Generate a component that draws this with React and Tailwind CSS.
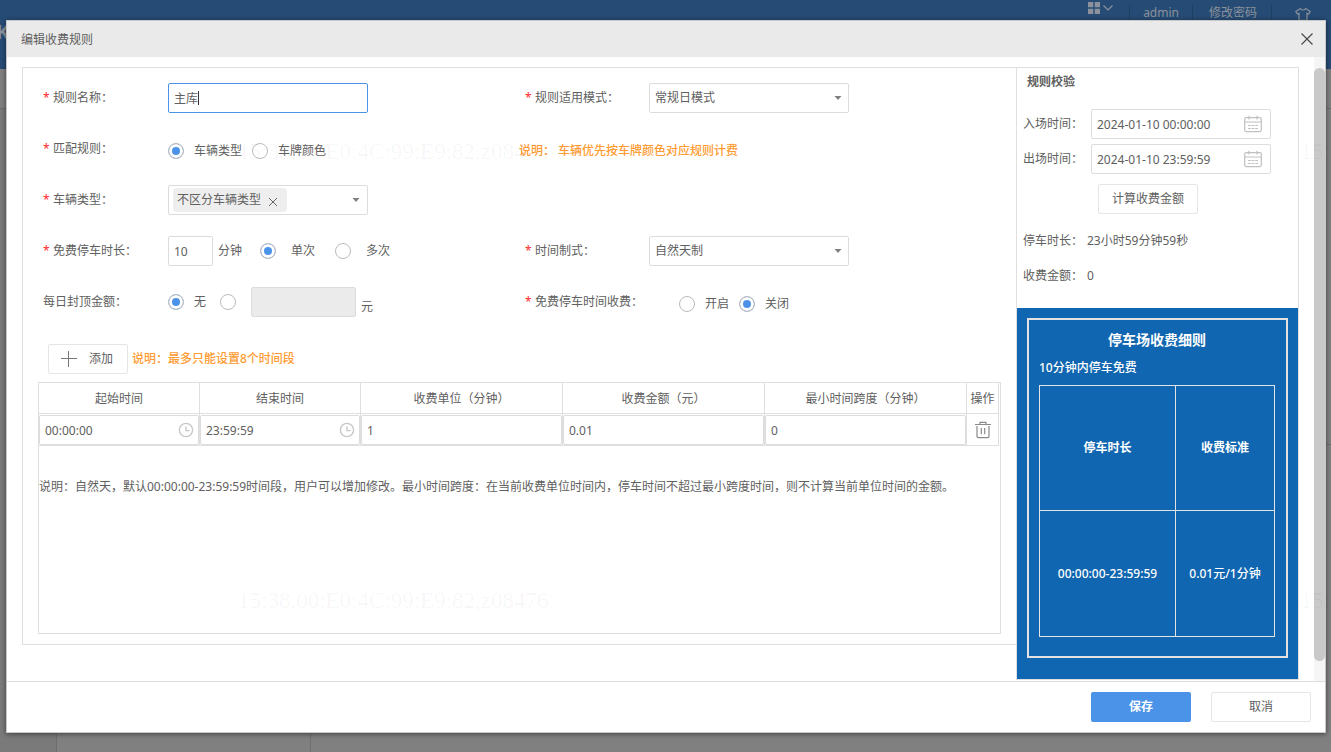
import { useState } from 'react';

const COLUMNS = [
  { key: 'start', label: '起始时间', width: 'w-[161px]' },
  { key: 'end', label: '结束时间', width: 'w-[161px]' },
  { key: 'unit', label: '收费单位（分钟）', width: 'w-[202px]' },
  { key: 'amount', label: '收费金额（元）', width: 'w-[202px]' },
  { key: 'span', label: '最小时间跨度（分钟）', width: 'w-[202px]' },
];

const WATERMARK = '15:38,00:E0:4C:99:E9:82,z08476';

function ClockIcon() {
  return (
    <svg className="absolute right-[5px] top-1/2 -translate-y-1/2 pointer-events-none" width="16" height="16" viewBox="0 0 16 16" fill="none" stroke="#c8c8c8" strokeWidth="1.4">
      <circle cx="8" cy="8" r="6.6" />
      <path d="M8 4.5V8.6H11.6" />
    </svg>
  );
}

function CalendarIcon() {
  return (
    <svg className="absolute right-[9px] top-1/2 -translate-y-1/2 pointer-events-none" width="18" height="18" viewBox="0 0 18 18" fill="none" stroke="#c0c0c0" strokeWidth="1.2">
      <rect x="0.7" y="2.6" width="16.6" height="14" rx="1.5" />
      <path d="M1 7H17M5 0.8V4.6M13 0.8V4.6" />
      <path d="M4 10.5H14M4 13.5H14" strokeDasharray="2.8 0.8" />
    </svg>
  );
}

function TrashIcon() {
  return (
    <svg width="16" height="18" viewBox="0 0 16 18" fill="none" stroke="#8a8a8a" strokeWidth="1.2">
      <path d="M0 3.5H16M5 3.5V1.3H11V3.5" />
      <path d="M2 5V15.2Q2 16.6 3.4 16.6H12.6Q14 16.6 14 15.2V5M6.3 7V13.2M9.7 7V13.2" />
    </svg>
  );
}

function Label({ htmlFor, required = true, className = 'w-[125px]', children }) {
  return (
    <label htmlFor={htmlFor} className={`${className} shrink-0 whitespace-nowrap flex`}>
      {required && <span className="w-[10px] text-[#ff2a2a]">*</span>}
      {children}
    </label>
  );
}

function Radio({ name, label, gap = 'gap-[10px]', ...props }) {
  return (
    <label className={`flex items-center ${gap}`}>
      <input
        type="radio"
        name={name}
        aria-label={label ? undefined : '自定义金额'}
        className="appearance-none w-4 h-4 rounded-full border border-[#bbb] bg-white checked:bg-[#4b93e8] checked:shadow-[inset_0_0_0_3px_#fff]"
        {...props}
      />
      {label}
    </label>
  );
}

function Caret() {
  return (
    <svg className="absolute right-[7px] top-1/2 -translate-y-1/2 pointer-events-none" width="8" height="5" viewBox="0 0 8 5">
      <path d="M0.5 0.5H7.5L4 4.5Z" fill="#808080" />
    </svg>
  );
}

function Select({ id, options }) {
  return (
    <div className="relative w-[200px]">
      <select id={id} className="appearance-none w-full h-[30px] border border-[#dcdcdc] rounded-xs bg-white px-[5px] leading-[28px]">
        {options.map((o) => <option key={o}>{o}</option>)}
      </select>
      <Caret />
    </div>
  );
}

function DateField({ id, label, value }) {
  return (
    <div className="flex items-center">
      <label htmlFor={id} className="w-[68px] shrink-0">{label}</label>
      <div className="relative w-[180px]">
        <input id={id} defaultValue={value} className="w-full h-[30px] border border-[#dcdcdc] rounded-xs px-[5px]" />
        <CalendarIcon />
      </div>
    </div>
  );
}

// Page behind the dialog, already dimmed by the mask
function Backdrop() {
  return (
    <div className="absolute inset-0 flex flex-col bg-[#808080]">
      <header className="h-[69px] shrink-0 bg-[#264b75] text-[#8b929b] flex justify-between">
        <span className="pt-[20px] -ml-1 text-xl leading-[24px] font-bold">K</span>
        <div className="flex items-start pt-[5px] pr-5 leading-4">
          <div className="flex items-center gap-[3px] -mt-[3px] mr-4">
            <svg width="12" height="12" viewBox="0 0 12 12" fill="#8b929b">
              <path d="M0 0H5.3V5.3H0ZM6.7 0H12V5.3H6.7ZM0 6.7H5.3V12H0ZM6.7 6.7H12V12H6.7Z" />
            </svg>
            <svg width="10" height="6" viewBox="0 0 10 6" fill="none" stroke="#8b929b" strokeWidth="1.2">
              <path d="M0.5 0.5L5 5L9.5 0.5" />
            </svg>
          </div>
          <span className="px-[13px] border-l border-[#1f3f63]">admin</span>
          <a href="#password" className="pl-4 pr-[14px] border-x border-[#1f3f63]">修改密码</a>
          <svg className="mt-[3px] ml-[23px]" width="16" height="13" viewBox="0 0 16 13" fill="none" stroke="#8b929b" strokeWidth="1.2">
            <path d="M5.3 0.6Q8 3.4 10.7 0.6L15.2 3.4L13.5 6.2L12 5.3V12.4H4V5.3L2.5 6.2L0.8 3.4Z" />
          </svg>
        </div>
      </header>
      <div className="h-[40px] shrink-0 border-b border-[#6e6e6e]" />
      <div className="flex-1 flex">
        <div className="w-[57px] border-r border-[#6e6e6e] bg-[#7a7a7a]" />
        <div className="w-[254px] border-r border-[#6e6e6e]" />
        <div className="flex-1">
          <div className="h-[336px] border-b border-[#6e6e6e]" />
        </div>
      </div>
    </div>
  );
}

function RuleForm() {
  const [tags, setTags] = useState(['不区分车辆类型']);

  return (
    <div className="grid grid-cols-2 gap-y-[21px] pl-5 pr-[9px] pt-[15px]">
      <div className="flex items-center h-[30px]">
        <Label htmlFor="name">规则名称：</Label>
        <div className="relative w-[200px]">
          <input id="name" defaultValue="主库" className="w-full h-[30px] border border-[#4b93e8] rounded-xs px-[5px] outline-none caret-transparent" />
          <span className="absolute left-[30px] top-2 w-px h-[14px] bg-[#333]" />
        </div>
      </div>
      <div className="flex items-center h-[30px]">
        <Label htmlFor="mode" className="w-[124px]">规则适用模式：</Label>
        <Select id="mode" options={['常规日模式', '节假日模式']} />
      </div>

      <div className="flex items-center h-[30px]">
        <Label>匹配规则：</Label>
        <div className="flex gap-[10px] pt-1">
          <Radio name="match" label="车辆类型" defaultChecked />
          <Radio name="match" label="车牌颜色" />
        </div>
      </div>
      <p className="-ml-[6px] h-[30px] pt-px leading-[32px] text-[#ff9b33] font-medium">说明： 车辆优先按车牌颜色对应规则计费</p>

      <div className="flex items-center h-[30px]">
        <Label>车辆类型：</Label>
        <div role="combobox" aria-expanded="false" aria-label="车辆类型" className="relative w-[200px] h-[30px] border border-[#dcdcdc] rounded-xs px-1 flex items-center">
          {tags.map((tag) => (
            <span key={tag} className="flex items-center gap-[7px] h-6 bg-[#eee] rounded px-1">
              {tag}
              <button type="button" aria-label="移除" className="px-px pt-[3px] mr-[5px]" onClick={() => setTags(tags.filter((t) => t !== tag))}>
                <svg width="8" height="8" viewBox="0 0 8 8" stroke="#666" fill="none">
                  <path d="M0 0L8 8M8 0L0 8" />
                </svg>
              </button>
            </span>
          ))}
          <Caret />
        </div>
      </div>
      <div />

      <div className="flex items-center h-[30px]">
        <Label htmlFor="free">免费停车时长：</Label>
        <input id="free" defaultValue="10" className="w-[45px] h-[30px] border border-[#dcdcdc] rounded-xs px-[5px] mr-[5px]" />
        <span className="mr-[18px]">分钟</span>
        <div className="flex gap-5">
          <Radio name="times" label="单次" gap="gap-[15px]" defaultChecked />
          <Radio name="times" label="多次" gap="gap-[15px]" />
        </div>
      </div>
      <div className="flex items-center h-[30px]">
        <Label htmlFor="time" className="w-[124px]">时间制式：</Label>
        <Select id="time" options={['自然天制', '24小时制']} />
      </div>

      <div className="flex items-center h-[30px]">
        <Label required={false}>每日封顶金额：</Label>
        <div className="flex gap-[14px] mr-[15px]">
          <Radio name="cap" label="无" defaultChecked />
          <Radio name="cap" gap="gap-0" />
        </div>
        <input disabled aria-label="每日封顶金额" className="w-[105px] h-[30px] border border-[#dcdcdc] rounded-xs bg-[#ebebeb] mr-[5px]" />
        <span className="self-end pb-[2px]">元</span>
      </div>
      <div className="flex items-center h-[30px]">
        <Label className="w-[154px]">免费停车时间收费：</Label>
        <div className="flex gap-[10px] pt-1">
          <Radio name="charge" label="开启" />
          <Radio name="charge" label="关闭" defaultChecked />
        </div>
      </div>
    </div>
  );
}

function PeriodTable() {
  const row = { start: '00:00:00', end: '23:59:59', unit: '1', amount: '0.01', span: '0' };

  return (
    <div className="mx-[15px] mt-2 mb-[10px] h-[252px] border border-[#dfdfdf]">
      <div className="pr-px">
        <table className="w-full table-fixed border-separate border-spacing-0">
          <thead>
            <tr className="h-[31px]">
              {COLUMNS.map((c) => (
                <th key={c.key} className={`${c.width} p-0 pt-px font-normal border-r border-b border-[#dfdfdf]`}>{c.label}</th>
              ))}
              <th className="w-[32px] p-0 pt-px font-normal border-r border-b border-[#dfdfdf]">操作</th>
            </tr>
          </thead>
          <tbody>
            <tr className="h-[32px]">
              {COLUMNS.map((c) => (
                <td key={c.key} className="p-0 pt-px border-r border-b border-[#dfdfdf]">
                  <div className="relative">
                    <input aria-label={c.label} defaultValue={row[c.key]} className="block w-full h-[30px] border border-[#dcdcdc] rounded-xs px-[5px]" />
                    {(c.key === 'start' || c.key === 'end') && <ClockIcon />}
                  </div>
                </td>
              ))}
              <td className="p-0 border-r border-b border-[#dfdfdf]">
                <button type="button" aria-label="删除" className="flex mx-auto"><TrashIcon /></button>
              </td>
            </tr>
          </tbody>
        </table>
      </div>
      <p className="mt-[31px] leading-[20px]">
        说明：自然天，默认00:00:00-23:59:59时间段，用户可以增加修改。最小时间跨度：在当前收费单位时间内，停车时间不超过最小跨度时间，则不计算当前单位时间的金额。
      </p>
    </div>
  );
}

function CheckPanel() {
  return (
    <aside className="w-[283px] shrink-0 border border-[#dfdfdf] flex flex-col">
      <div className="h-[240px] pl-[6px]">
        <h3 className="font-bold pl-1 pt-1 leading-[20px]">规则校验</h3>
        <div className="mt-[17px] flex flex-col gap-[5px]">
          <DateField id="in" label="入场时间：" value="2024-01-10 00:00:00" />
          <DateField id="out" label="出场时间：" value="2024-01-10 23:59:59" />
        </div>
        <button type="button" className="block mt-[10px] ml-[75px] w-[100px] h-[30px] border border-[#e6e6e6] rounded-xs bg-white">计算收费金额</button>
        <dl className="mt-[17px] grid grid-cols-[64px_1fr] gap-y-[15px] leading-[20px]">
          <dt>停车时长：</dt>
          <dd>23小时59分钟59秒</dd>
          <dt>收费金额：</dt>
          <dd>0</dd>
        </dl>
      </div>
      <div className="bg-[#1066b0] px-[10px] pt-[10px] pb-[21px] text-white">
        <div className="border-2 border-[#e3e3e3] h-[340px] pl-[10px] pr-[11px] pt-[10px]">
          <h4 className="text-center text-sm leading-[20px] font-bold">停车场收费细则</h4>
          <p className="mt-2 leading-[20px] font-medium">10分钟内停车免费</p>
          <table className="mt-[7px] w-full table-fixed border-collapse font-medium">
            <thead>
              <tr className="h-[125px]">
                <th className="w-[136px] border border-[#e3e3e3] p-0 font-bold">停车时长</th>
                <th className="border border-[#e3e3e3] p-0 font-bold">收费标准</th>
              </tr>
            </thead>
            <tbody className="text-center">
              <tr className="h-[126px]">
                <td className="border border-[#e3e3e3] p-0">00:00:00-23:59:59</td>
                <td className="border border-[#e3e3e3] p-0">0.01元/1分钟</td>
              </tr>
            </tbody>
          </table>
        </div>
      </div>
    </aside>
  );
}

function Watermark() {
  const rows = ['top-[140px]', 'top-[589px]'];
  return (
    <div aria-hidden="true" className="absolute inset-0 overflow-hidden pointer-events-none whitespace-nowrap font-['Liberation_Serif',serif] text-[23px] leading-[24px] text-black/4">
      {rows.map((top) => (
        <div key={top} className={`absolute left-[238px] flex gap-[752px] ${top}`}>
          <span>{WATERMARK}</span>
          <span>{WATERMARK}</span>
        </div>
      ))}
    </div>
  );
}

export default function App() {
  return (
    <div lang="zh-CN" className="relative h-screen overflow-hidden text-xs text-[#606060] font-['Noto_Sans','Noto_Sans_CJK_SC',sans-serif]">
      <Backdrop />
      <div className="absolute inset-0 pt-5 pb-[19px] pl-[6px] pr-[5px] flex">
        <section role="dialog" aria-label="编辑收费规则" className="flex-1 min-w-0 flex flex-col bg-white border border-[#c8c8c8] shadow-[0_1px_5px_rgba(0,0,0,0.5)]">
          <div className="h-[36px] shrink-0 bg-[#eaeaea] flex items-center justify-between pl-[14px] pr-3">
            <h2 className="pt-px">编辑收费规则</h2>
            <button type="button" aria-label="关闭">
              <svg width="12" height="12" viewBox="0 0 12 12" fill="none" stroke="#444" strokeWidth="1.1">
                <path d="M0.5 0.5L11.5 11.5M11.5 0.5L0.5 11.5" />
              </svg>
            </button>
          </div>

          <div className="flex-1 min-h-0 flex overflow-hidden">
            <div className="flex-1 min-w-0 flex items-start pl-[15px] pr-[15px] pt-[10px]">
              <div className="flex-1 min-w-0 border border-r-0 border-[#dfdfdf]">
                <RuleForm />
                <div className="flex items-center gap-1 mt-[27px] ml-[25px]">
                  <button type="button" className="flex items-center gap-3 w-[80px] h-[30px] pl-3 border border-[#e6e6e6] rounded-xs bg-white">
                    <svg width="16" height="16" viewBox="0 0 16 16" fill="none" stroke="#777">
                      <path d="M7.5 0V16M0 7.5H16" />
                    </svg>
                    添加
                  </button>
                  <p className="text-[#ff9b33] font-medium">说明：最多只能设置8个时间段</p>
                </div>
                <PeriodTable />
              </div>
              <CheckPanel />
            </div>
            {/* scrollbar */}
            <div className="w-[11px] shrink-0 bg-[#f5f5f5] pt-[11px] pb-[20px]">
              <div className="h-full rounded-full bg-[#c9c9c9]" />
            </div>
          </div>

          <div className="h-[51px] shrink-0 border-t border-[#dfdfdf] flex items-center justify-end gap-5 pr-[14px]">
            <button type="button" className="w-[100px] h-[30px] rounded-xs bg-[#4b93e8] text-white font-bold">保存</button>
            <button type="button" className="w-[100px] h-[30px] rounded-xs border border-[#e6e6e6] bg-white">取消</button>
          </div>
        </section>
      </div>
      <Watermark />
    </div>
  );
}
